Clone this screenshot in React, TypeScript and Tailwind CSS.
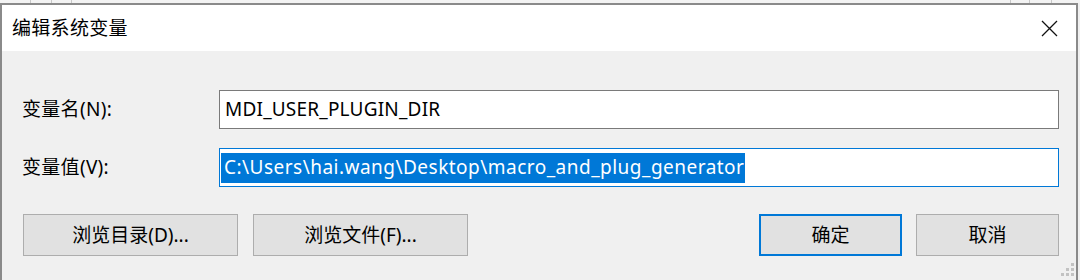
import React from "react";

const font = "font-['Noto_Sans','Noto_Sans_CJK_SC',sans-serif]";

export default function App() {
  return (
    <div className={`w-[1080px] h-[280px] bg-[#f0f0f0] flex flex-col overflow-hidden ${font} text-black`}>
      {/* background window tabs strip */}
      <div className="h-[3px] flex bg-[#f3f3f3]">
        <div className="ml-[30px] w-[22px] border-x border-[#c8c8c8]" />
        <div className="w-[20px] border-r border-[#c8c8c8]" />
        <div className="flex-1" />
        <div className="w-[20px] border-x border-[#c8c8c8]" />
        <div className="w-[22px] border-r border-[#c8c8c8] mr-[28px]" />
      </div>
      {/* dialog window */}
      <div className="flex-1 flex flex-col border-t-2 border-l-2 border-r-2 border-[#8a8a8a] mr-[2px] relative">
        {/* title bar */}
        <div className="h-[46px] bg-white flex items-center justify-between pl-[10px] pr-[18px]">
          <span className="text-[19px] leading-none tracking-[0.3px]">编辑系统变量</span>
          <svg width="17" height="17" viewBox="0 0 17 17" className="mt-[1px]">
            <path d="M1 1 L16 16 M16 1 L1 16" stroke="#111" strokeWidth="1.3" />
          </svg>
        </div>
        {/* body */}
        <div className="flex-1 flex flex-col pl-[20px] pr-[17px] pt-[39px]">
          <div className="flex items-center h-[39px]">
            <div className="w-[197px] text-[19px] tracking-[0.3px]">变量名(N):</div>
            <div className="flex-1 h-[39px] bg-white border border-[#7a7a7a] flex items-center pl-[5px] text-[19px] tracking-[0.2px]">
              MDI_USER_PLUGIN_DIR
            </div>
          </div>
          <div className="flex items-center h-[39px] mt-[19px]">
            <div className="w-[197px] text-[19px] tracking-[0.3px]">变量值(V):</div>
            <div className="flex-1 h-[39px] bg-white border border-[#0078d7] flex items-center pl-[1px] text-[19px]">
              <span className="bg-[#0078d7] text-white pl-[3px] pr-[1px] h-[30px] flex items-center tracking-[0.48px]">
                C:\Users\hai.wang\Desktop\macro_and_plug_generator
              </span>
            </div>
          </div>
          <div className="flex items-center mt-[27px] text-[19px]">
            <button className="ml-[1px] w-[215px] h-[42px] bg-[#e1e1e1] border border-[#adadad] flex items-center justify-center">
              浏览目录(D)...
            </button>
            <button className="ml-[15px] w-[215px] h-[42px] bg-[#e1e1e1] border border-[#adadad] flex items-center justify-center">
              浏览文件(F)...
            </button>
            <div className="flex-1" />
            <button className="w-[143px] h-[42px] bg-[#e1e1e1] border-2 border-[#0078d7] flex items-center justify-center">
              确定
            </button>
            <button className="ml-[14px] w-[143px] h-[42px] bg-[#e1e1e1] border border-[#adadad] flex items-center justify-center">
              取消
            </button>
          </div>
        </div>
        {/* resize grip */}
        <div className="absolute right-[2px] bottom-[4px] grid grid-cols-3 gap-[2px]">
          <div className="w-[3px] h-[3px]" />
          <div className="w-[3px] h-[3px]" />
          <div className="w-[3px] h-[3px] bg-[#c2c2c2]" />
          <div className="w-[3px] h-[3px]" />
          <div className="w-[3px] h-[3px] bg-[#c2c2c2]" />
          <div className="w-[3px] h-[3px] bg-[#c2c2c2]" />
          <div className="w-[3px] h-[3px] bg-[#c2c2c2]" />
          <div className="w-[3px] h-[3px] bg-[#c2c2c2]" />
          <div className="w-[3px] h-[3px] bg-[#c2c2c2]" />
        </div>
      </div>
    </div>
  );
}
